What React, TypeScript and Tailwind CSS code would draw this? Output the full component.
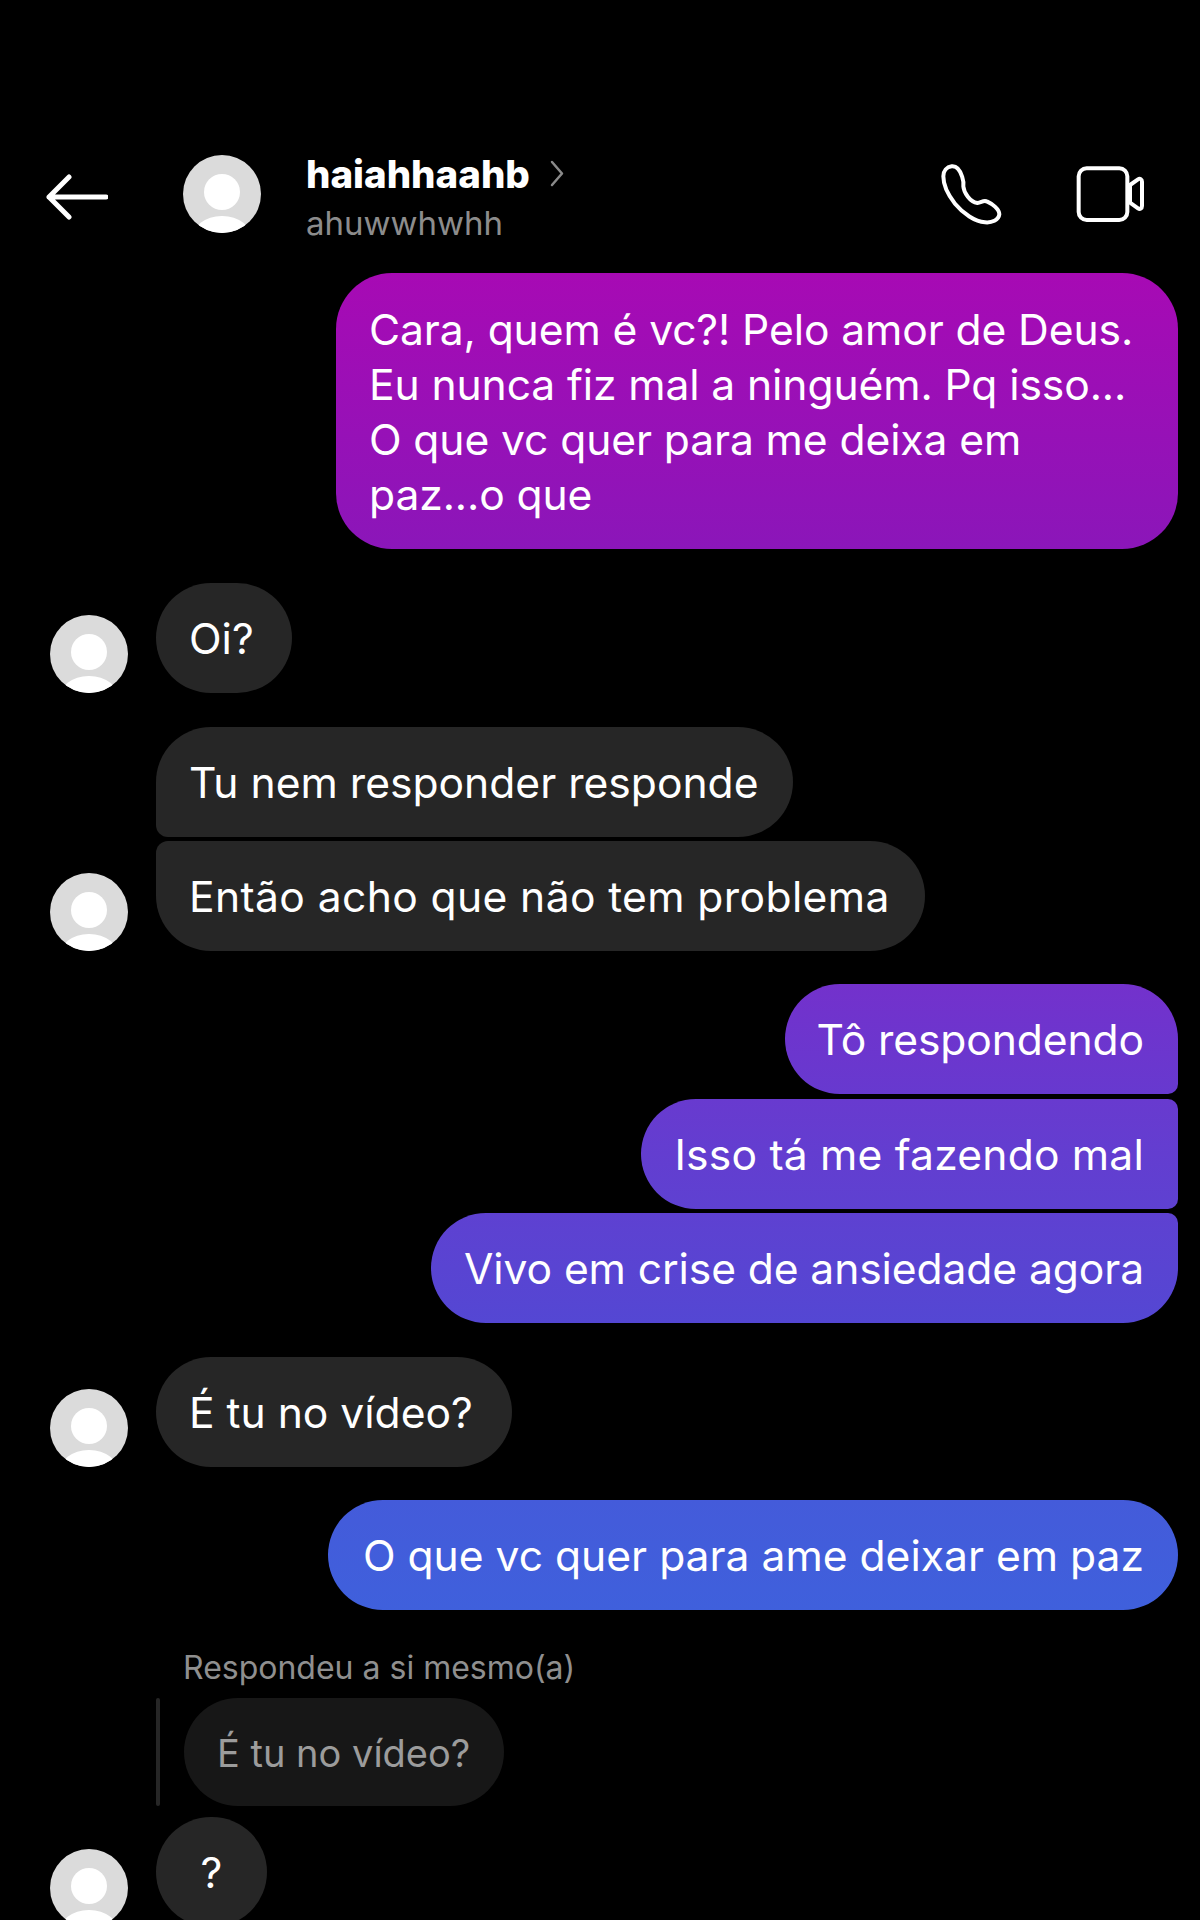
import React from "react";

function Avatar({ size = "w-[78px] h-[78px]" }: { size?: string }) {
  return (
    <div className={`${size} shrink-0 rounded-full bg-[#dbdbdb] overflow-hidden relative`}>
      <div className="absolute left-[27%] top-[24%] w-[46%] h-[46%] rounded-full bg-white" />
      <div className="absolute left-[12%] top-[78%] w-[76%] h-[60%] rounded-[50%] bg-white" />
    </div>
  );
}

function Me({ children, cls }: { children: React.ReactNode; cls: string }) {
  return (
    <div className={`self-end pr-[34px] text-white text-[42.6px] leading-[55px] whitespace-nowrap ${cls}`}>
      {children}
    </div>
  );
}

function Them({ children, cls }: { children: React.ReactNode; cls: string }) {
  return (
    <div className={`py-[27.5px] bg-[#262626] text-white text-[42.6px] leading-[55px] whitespace-nowrap ${cls}`}>
      {children}
    </div>
  );
}

export default function App() {
  return (
    <div className="w-[1200px] h-[1920px] overflow-hidden bg-black flex flex-col font-['Inter',sans-serif]">
      <div className="mt-[155px] h-[78px] flex items-center pl-[46px] pr-[56px] shrink-0">
        <svg width="62" height="46" viewBox="0 0 62 46" fill="none" stroke="#fff" strokeWidth="5" strokeLinecap="round" strokeLinejoin="round" className="shrink-0 mt-[6px]">
          <path d="M60 23H3M23 3 3 23 23 43" />
        </svg>
        <div className="ml-[75px]"><Avatar /></div>
        <div className="ml-[45px] flex flex-col mt-[5px]">
          <div className="flex items-center">
            <span className="text-white font-extrabold text-[38.5px] leading-[44px]">haiahhaahb</span>
            <svg width="14" height="28" viewBox="0 0 14 28" fill="none" stroke="#8a8a8a" strokeWidth="2.500" strokeLinecap="round" strokeLinejoin="round" className="ml-[20px]">
              <path d="M2 2 12 13.500 2 25" />
            </svg>
          </div>
          <span className="text-[#8c8c8c] text-[33px] leading-[38px] mt-[8px]">ahuwwhwhh</span>
        </div>
        <div className="ml-auto flex items-center">
          <svg width="64" height="64" viewBox="120 65 192 192" fill="none" stroke="#fff" strokeWidth="12" strokeLinejoin="round">
            <path d="M155 78C170 76 180 90 186 108C190 120 192 125 190 138C192 158 210 185 232 188C245 186 252 178 262 184C275 190 298 205 298 222C296 240 275 248 255 246C225 244 190 220 165 190C145 165 130 135 130 108C130 92 140 80 155 78Z" />
          </svg>
          <svg width="68" height="56" viewBox="530 78 204 168" fill="none" stroke="#fff" strokeWidth="12" strokeLinejoin="round" className="ml-[72px]">
            <rect x="538" y="85" width="146" height="155" rx="24" />
            <path d="M692 135 716 118C722 114 728 118 728 125V198C728 205 722 209 716 205L692 188Z" />
          </svg>
        </div>
      </div>

      <div className="flex flex-col">
        <div className="mr-[22px] mt-[40px] self-end">
          <Me cls="w-[842px] pl-[33px] pt-[29px] pb-[27px] rounded-[56px] bg-[linear-gradient(180deg,#a70ab4,#8b16b9)] tracking-[-0.1px]">
            Cara, quem é vc?! Pelo amor de Deus.<br />
            Eu nunca fiz mal a ninguém. Pq isso...<br />
            O que vc quer para me deixa em<br />
            paz...o que
          </Me>
        </div>

        <div className="mt-[34px] flex items-end pl-[50px] gap-[28px]">
          <Avatar />
          <Them cls="w-[136px] pl-[33px] rounded-[55px]">Oi?</Them>
        </div>

        <div className="mt-[34px] flex items-end pl-[50px] gap-[28px]">
          <Avatar />
          <div className="flex flex-col gap-[4px]">
            <Them cls="w-[637px] pl-[33px] rounded-[55px] rounded-bl-[12px]">Tu nem responder responde</Them>
            <Them cls="w-[769px] pl-[33px] rounded-[55px] rounded-tl-[12px] tracking-[0.38px]">Então acho que não tem problema</Them>
          </div>
        </div>

        <div className="mt-[33px] mr-[22px] flex flex-col">
          <Me cls="w-[393px] py-[27.5px] mb-[5px] text-right rounded-[55px] rounded-br-[10px] bg-[linear-gradient(180deg,#7331cc,#6739cf)] tracking-[-0.1px]">Tô respondendo</Me>
          <Me cls="w-[537px] py-[27.5px] mb-[4px] text-right rounded-[55px] rounded-r-[10px] bg-[linear-gradient(180deg,#683acf,#5e41d1)] tracking-[0.2px]">Isso tá me fazendo mal</Me>
          <Me cls="w-[747px] py-[27.5px] text-right rounded-[55px] rounded-tr-[10px] bg-[linear-gradient(180deg,#5e41d1,#5447d3)] tracking-[-0.1px]">Vivo em crise de ansiedade agora</Me>
        </div>

        <div className="mt-[34px] flex items-end pl-[50px] gap-[28px]">
          <Avatar />
          <Them cls="w-[356px] pl-[33px] rounded-[55px]">É tu no vídeo?</Them>
        </div>

        <div className="mt-[33px] mr-[22px] self-end">
          <Me cls="w-[850px] py-[27.5px] text-right rounded-[55px] bg-[linear-gradient(180deg,#445bda,#3f60dc)]">O que vc quer para ame deixar em paz</Me>
        </div>

        <div className="mt-[39px] ml-[183px] text-[#8f8f8f] text-[32px] leading-[38px]">Respondeu a si mesmo(a)</div>

        <div className="mt-[11px] ml-[156px] flex gap-[24px]">
          <div className="w-[4px] bg-[#262626] rounded-full" />
          <div className="w-[320px] h-[108px] pt-[3px] rounded-[54px] bg-[#171717] text-[#9c9c9c] text-[38px] flex items-center px-[33px] whitespace-nowrap">É tu no vídeo?</div>
        </div>

        <div className="mt-[11px] flex items-end pl-[50px] gap-[28px]">
          <Avatar />
          <Them cls="w-[111px] text-center rounded-[55px]">?</Them>
        </div>
      </div>
    </div>
  );
}
